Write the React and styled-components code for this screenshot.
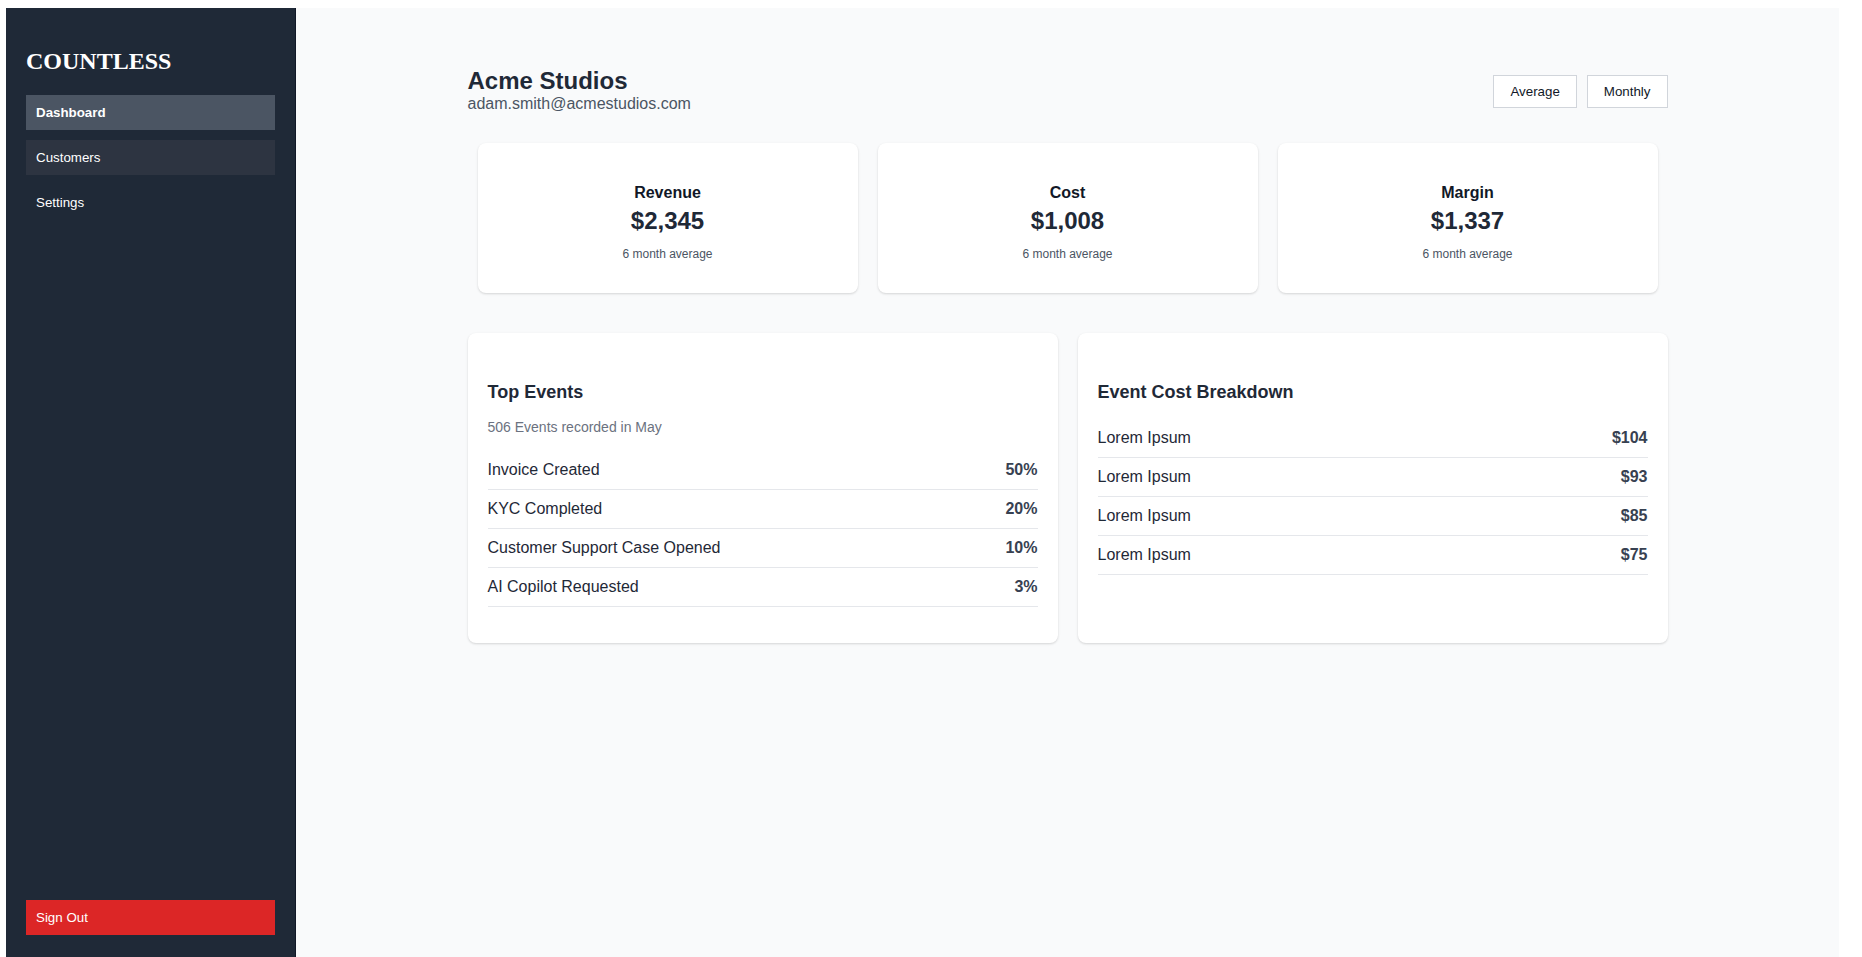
import styled, { createGlobalStyle } from "styled-components";

const GlobalStyle = createGlobalStyle`
  body {
    margin: 8px 23px 8px 6px;
    font-family: "Liberation Sans", Arial, sans-serif;
    background: #ffffff;
  }
`;

const stats = [
    { label: "Revenue", value: "$2,345" },
    { label: "Cost", value: "$1,008" },
    { label: "Margin", value: "$1,337" },
];

const events = [
    { name: "Invoice Created", value: "50%" },
    { name: "KYC Completed", value: "20%" },
    { name: "Customer Support Case Opened", value: "10%" },
    { name: "AI Copilot Requested", value: "3%" },
];

const costs = [
    { name: "Lorem Ipsum", value: "$104" },
    { name: "Lorem Ipsum", value: "$93" },
    { name: "Lorem Ipsum", value: "$85" },
    { name: "Lorem Ipsum", value: "$75" },
];

const App = () => {
    return (
        <>
            <GlobalStyle />
            <Layout>
                <Sidebar>
                    <Logo>COUNTLESS</Logo>
                    <NavButton $active>Dashboard</NavButton>
                    <NavButton $hover>Customers</NavButton>
                    <NavButton>Settings</NavButton>
                    <SignOut>Sign Out</SignOut>
                </Sidebar>
                <Main>
                    <Content>
                        <Header>
                            <div>
                                <Company>Acme Studios</Company>
                                <Email>adam.smith@acmestudios.com</Email>
                            </div>
                            <Toggles>
                                <ToggleButton>Average</ToggleButton>
                                <ToggleButton>Monthly</ToggleButton>
                            </Toggles>
                        </Header>

                        <StatRow>
                            {stats.map((s) => (
                                <StatCard key={s.label}>
                                    <StatLabel>{s.label}</StatLabel>
                                    <StatValue>{s.value}</StatValue>
                                    <StatSub>6 month average</StatSub>
                                </StatCard>
                            ))}
                        </StatRow>

                        <Panels>
                            <Panel>
                                <PanelTitle>Top Events</PanelTitle>
                                <PanelSub>506 Events recorded in May</PanelSub>
                                <List>
                                    {events.map((e) => (
                                        <Row key={e.name}>
                                            <RowName>{e.name}</RowName>
                                            <RowValue>{e.value}</RowValue>
                                        </Row>
                                    ))}
                                </List>
                            </Panel>
                            <Panel>
                                <PanelTitle>Event Cost Breakdown</PanelTitle>
                                <List>
                                    {costs.map((c, i) => (
                                        <Row key={i}>
                                            <RowName>{c.name}</RowName>
                                            <RowValue>{c.value}</RowValue>
                                        </Row>
                                    ))}
                                </List>
                            </Panel>
                        </Panels>
                    </Content>
                </Main>
            </Layout>
        </>
    );
};

const Layout = styled.div`
display: flex;
height: 100vh;
`;

const Sidebar = styled.nav`
width: 290px;
flex-shrink: 0;
height: 100vh;
box-sizing: border-box;
padding: 20px;
background: #1f2937;
border-right: 1px solid #111827;
display: flex;
flex-direction: column;
`;

const Logo = styled.h2`
font-family: "Liberation Serif", "Times New Roman", serif;
font-size: 24px;
font-weight: bold;
color: #ffffff;
margin: 20px 0;
`;

const NavButton = styled.button`
display: block;
width: 100%;
padding: 10px;
margin: 0 0 10px;
border: none;
text-align: left;
font-family: "Liberation Sans", Arial, sans-serif;
font-size: 13.333px;
font-weight: ${(p) => (p.$active ? "bold" : "normal")};
color: #ffffff;
background: ${(p) => (p.$active ? "#4b5563" : p.$hover ? "#2d3441" : "transparent")};
cursor: pointer;
`;

const SignOut = styled(NavButton)`
margin-top: auto;
background: #dc2626;
`;

const Main = styled.main`
flex: 1;
background: #f9fafb;
padding: 40px;
overflow: hidden;
`;

const Content = styled.div`
max-width: 1200px;
margin: 0 auto;
`;

const Header = styled.header`
display: flex;
justify-content: space-between;
align-items: center;
margin-top: 19px;
`;

const Company = styled.h1`
margin: 0;
font-size: 24px;
font-weight: bold;
color: #1f2937;
`;

const Email = styled.p`
margin: 0;
font-size: 16px;
color: #4b5563;
`;

const Toggles = styled.div`
display: flex;
gap: 10px;
margin-top: 3px;
`;

const ToggleButton = styled.button`
padding: 8px 16px;
background: #ffffff;
border: 1px solid #d1d5db;
font-family: "Liberation Sans", Arial, sans-serif;
font-size: 13.333px;
color: #111827;
cursor: pointer;
`;

const StatRow = styled.div`
display: flex;
margin-top: 20px;
`;

const StatCard = styled.div`
flex: 1;
margin: 10px;
padding: 20px;
background: #ffffff;
border-radius: 8px;
box-shadow: 0 1px 3px rgba(0, 0, 0, 0.1), 0 1px 2px rgba(0, 0, 0, 0.06);
text-align: center;
`;

const StatLabel = styled.h4`
margin: 21px 0 5px;
font-size: 16px;
color: #111827;
`;

const StatValue = styled.div`
font-size: 24px;
font-weight: bold;
color: #1f2937;
`;

const StatSub = styled.p`
margin: 12px 0;
font-size: 12px;
color: #4b5563;
`;

const Panels = styled.div`
display: grid;
grid-template-columns: 1fr 1fr;
gap: 20px;
margin-top: 30px;
`;

const Panel = styled.section`
padding: 20px;
background: #ffffff;
border-radius: 8px;
box-shadow: 0 1px 3px rgba(0, 0, 0, 0.1), 0 1px 2px rgba(0, 0, 0, 0.06);
`;

const PanelTitle = styled.h3`
margin: 29px 0 16px;
font-size: 18px;
font-weight: bold;
color: #1f2937;
`;

const PanelSub = styled.p`
margin: 16px 0;
font-size: 14px;
color: #6b7280;
`;

const List = styled.ul`
list-style: none;
margin: 16px 0;
padding: 0;
`;

const Row = styled.li`
display: flex;
justify-content: space-between;
padding: 10px 0;
border-bottom: 1px solid #e5e7eb;
font-size: 16px;
`;

const RowName = styled.span`
color: #1f2937;
`;

const RowValue = styled.span`
font-weight: bold;
color: #374151;
`;

export default App;
